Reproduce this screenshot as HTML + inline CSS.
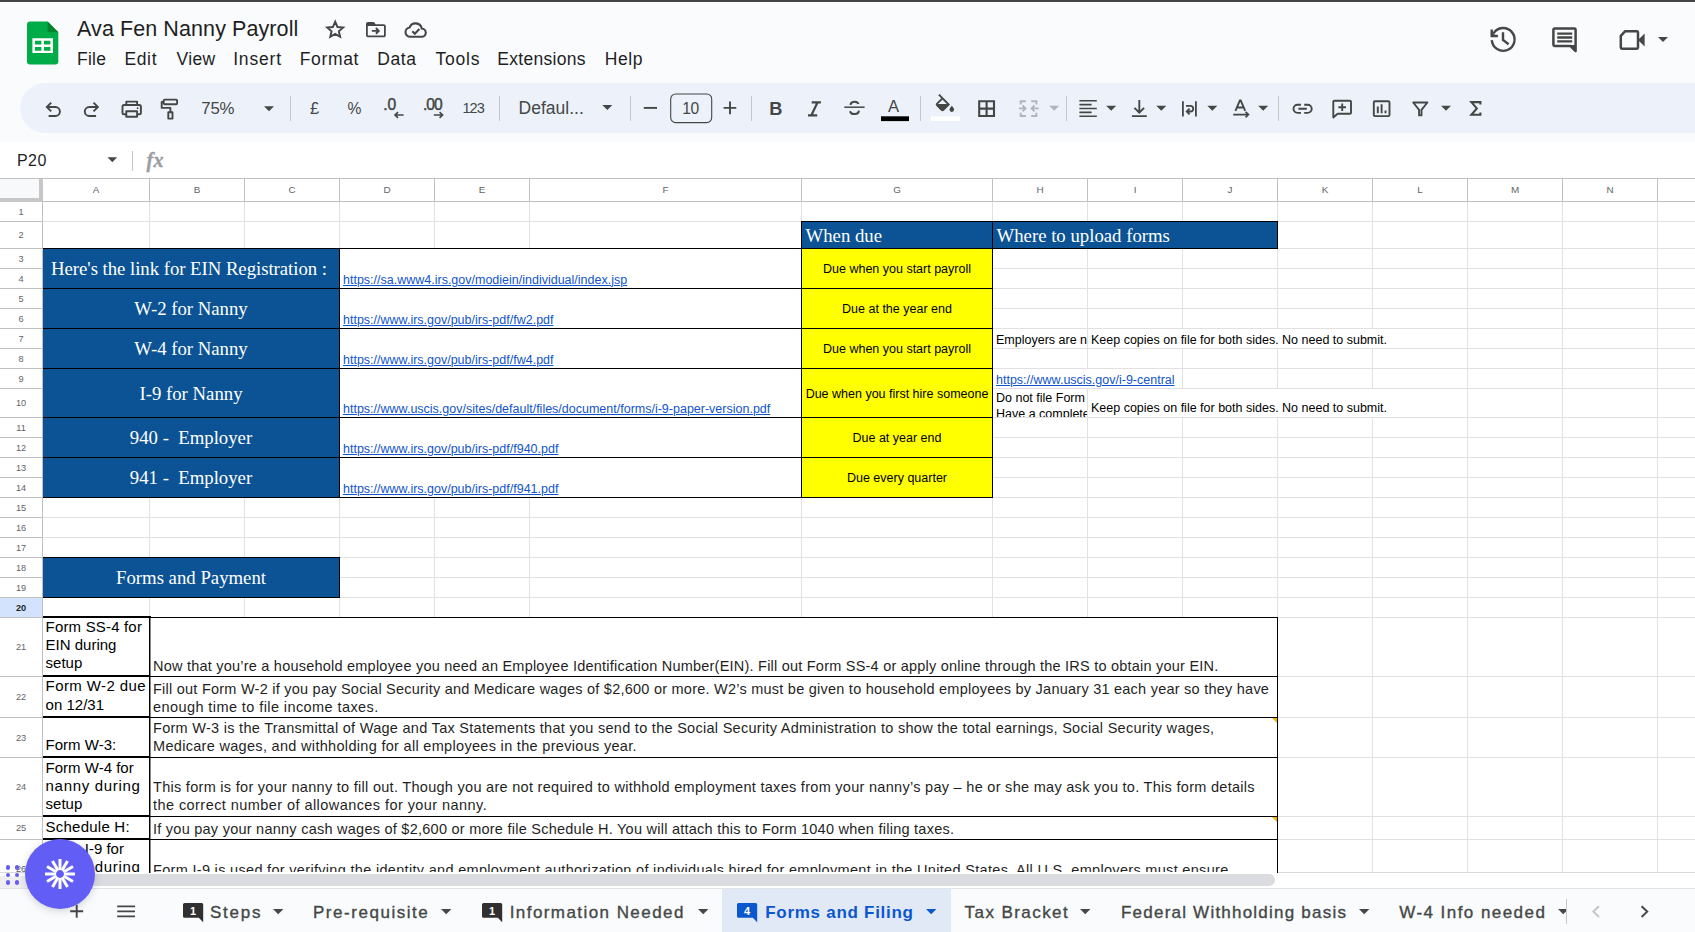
<!DOCTYPE html>
<html lang="en"><head><meta charset="utf-8"><title>Ava Fen Nanny Payroll - Google Sheets</title>
<style>
html,body{margin:0;padding:0}
body{width:1695px;height:932px;overflow:hidden;background:#f9fbfd;position:relative;font-family:"Liberation Sans",sans-serif;color:#444746}
div,span,a,svg{position:absolute;box-sizing:border-box}
.t{white-space:pre;line-height:1}
.menu{font-size:17.5px;color:#1f1f1f;top:50px;line-height:20px;white-space:pre}
.ch{font-size:9.9px;color:#5f6368;top:184px;height:11px;line-height:11px;text-align:center;white-space:pre}
.rh{font-size:9.2px;color:#5f6368;left:0;width:42px;line-height:10px;height:10px;text-align:center;white-space:pre}
.vl{width:1px;background:#e1e1e1}
.hl{height:1px;background:#e1e1e1}
.blue{background:#0b5394;border:1px solid #000;color:#fff;font-family:"Liberation Serif",serif;font-weight:400;font-size:18.75px;white-space:pre;display:flex;align-items:center;justify-content:center}
.yel{background:#ffff00;border:1px solid #000;color:#000;font-size:12.5px;white-space:pre;display:flex;align-items:center;justify-content:center}
.lnk{background:#fff;border:1px solid #000;font-size:12.5px;white-space:pre}
.lnk a, a.u{color:#1155cc;text-decoration:underline;text-decoration-thickness:1px;text-underline-offset:1px;white-space:pre}
.ar{font-size:12.5px;color:#000;white-space:pre;line-height:15px}
.ca{font-size:15px;color:#000;line-height:18px;white-space:pre}
.tab{font-size:17px;font-weight:400;color:#444746;top:903px;line-height:20px;white-space:pre;-webkit-text-stroke:0.35px #444746}
.tri{width:0;height:0;border-left:5px solid transparent;border-right:5px solid transparent;border-top:5px solid #444746}
.sep{width:1px;background:#c7c7c7;top:96px;height:25px}
.ic{overflow:visible}
</style></head><body>

<div style="left:0px;top:0px;width:1695px;height:2px;background:#444444"></div>
<div style="left:0px;top:2px;width:1695px;height:1px;background:#ffffff"></div>
<svg style="left:27px;top:21px" width="32" height="44" viewBox="0 0 32 44">
<path d="M3 0.5 H20.6 L31.3 11.2 V40.5 a3 3 0 0 1 -3 3 H3 a3 3 0 0 1 -3 -3 V3.5 a3 3 0 0 1 3 -3 z" fill="#00ac47"/>
<path d="M20.6 0.5 L31.3 11.2 H20.6 z" fill="#00832d"/>
<path d="M5.4 17.2 h20.6 v14.9 h-20.6 z M8 19.7 v3.9 h6.4 v-3.9 z M16.9 19.7 v3.9 h6.5 v-3.9 z M8 26 v3.7 h6.4 v-3.7 z M16.9 26 v3.7 h6.5 v-3.7 z" fill="#fff" fill-rule="evenodd"/>
</svg>
<div class="t" style="left:77px;top:17px;font-size:21.5px;line-height:24px;color:#1f1f1f;letter-spacing:.09px">Ava Fen Nanny Payroll</div>
<svg class="ic" style="left:325.4px;top:18.6px" width="20.4" height="20.4" viewBox="0 0 24 24"><path d="M12 3.2 l2.65 6.2 6.75 .58 -5.12 4.43 1.54 6.59 L12 17.5 6.18 21 l1.54 -6.59 L2.6 9.98 l6.75 -.58 z" fill="none" stroke="#444746" stroke-width="2.25" stroke-linejoin="miter"/></svg>
<svg class="ic" style="left:365.8px;top:22px" width="19.8" height="15.3" viewBox="0 0 22 17"><path d="M2.2 1 h6 l2 2.4 h9.6 a1.2 1.2 0 0 1 1.2 1.2 v10.2 a1.2 1.2 0 0 1 -1.2 1.2 H2.2 a1.2 1.2 0 0 1 -1.2 -1.2 V2.2 a1.2 1.2 0 0 1 1.2 -1.2 z" fill="none" stroke="#444746" stroke-width="2" stroke-linejoin="round"/><path d="M1 1 h7.6 l2.3 3.5 H1 z" fill="#444746"/><path d="M6.5 9.9 h7.2 M11 6.7 l3.2 3.2 -3.2 3.2" fill="none" stroke="#444746" stroke-width="2.1"/></svg>
<svg class="ic" style="left:404px;top:22px" width="24" height="16" viewBox="0 0 24 16"><path d="M6.2 14.8 a4.7 4.7 0 0 1 -.6 -9.36 a6.3 6.3 0 0 1 12.1 1.1 a4.15 4.15 0 0 1 .5 8.26 z" fill="none" stroke="#444746" stroke-width="2.1" stroke-linejoin="round"/><path d="M8.3 9.3 l2.5 2.5 4.6 -4.7" fill="none" stroke="#444746" stroke-width="2.1"/></svg>
<div class="menu" style="left:77px;top:49px;line-height:20px;letter-spacing:0.232px">File</div>
<div class="menu" style="left:124.4px;top:49px;line-height:20px;letter-spacing:0.648px">Edit</div>
<div class="menu" style="left:176.6px;top:49px;line-height:20px;letter-spacing:0.292px">View</div>
<div class="menu" style="left:233.2px;top:49px;line-height:20px;letter-spacing:0.824px">Insert</div>
<div class="menu" style="left:299.8px;top:49px;line-height:20px;letter-spacing:0.633px">Format</div>
<div class="menu" style="left:377.2px;top:49px;line-height:20px;letter-spacing:0.61px">Data</div>
<div class="menu" style="left:435.6px;top:49px;line-height:20px;letter-spacing:0.76px">Tools</div>
<div class="menu" style="left:497.2px;top:49px;line-height:20px;letter-spacing:0.31px">Extensions</div>
<div class="menu" style="left:604.7px;top:49px;line-height:20px;letter-spacing:0.633px">Help</div>
<svg class="ic" style="left:1486px;top:22px" width="34" height="34" viewBox="1486 22 34 34"><path d="M1493.5 33.4 A11.4 11.4 0 1 1 1491.8 40.2" fill="none" stroke="#444746" stroke-width="2.4"/><path d="M1491.7 29.6 V36 H1497.9" fill="none" stroke="#444746" stroke-width="2.4"/><path d="M1491.7 31.5 L1496 36 H1491.7 z" fill="#444746"/><path d="M1503 32.2 V40 L1508.6 44.2" fill="none" stroke="#444746" stroke-width="2.4"/></svg>
<svg class="ic" style="left:1551px;top:26px" width="28" height="28" viewBox="0 0 28 28"><path d="M3.6 2.6 h19.8 a1.2 1.2 0 0 1 1.2 1.2 v21.2 l-5 -5 H3.6 a1.2 1.2 0 0 1 -1.2 -1.2 V3.8 a1.2 1.2 0 0 1 1.2 -1.2 z" fill="none" stroke="#444746" stroke-width="2.5" stroke-linejoin="round"/><path d="M24.6 25 v-6 h-6 z" fill="#444746"/><path d="M6.2 7.6 h15 M6.2 11.5 h15 M6.2 15.4 h15" stroke="#444746" stroke-width="2.3"/></svg>
<svg class="ic" style="left:1618px;top:29px" width="28" height="22" viewBox="0 0 28 22"><path d="M7.2 2.2 h11.6 a1.2 1.2 0 0 1 1.2 1.2 v15.2 a1.2 1.2 0 0 1 -1.2 1.2 H4 a1.2 1.2 0 0 1 -1.2 -1.2 V6.8 z" fill="none" stroke="#444746" stroke-width="2.5" stroke-linejoin="round"/><path d="M20 11 l6.6 -6.4 v12.8 z" fill="#444746"/></svg>
<div class="tri" style="left:1658px;top:37px"></div>
<div style="left:20px;top:83px;width:1700px;height:50px;background:#edf2fa;border-radius:25px"></div>
<svg style="left:0;top:78px" width="1695" height="60" viewBox="0 78 1695 60"><path d="M48.6 116 H55.4 a4.5 4.5 0 0 0 0 -9 H47.4 M51.2 102.6 L46.8 107 L51.2 111.4" fill="none" stroke="#444746" stroke-width="1.9"/>
<path d="M96.1 116 H89.3 a4.5 4.5 0 0 1 0 -9 H97.3 M93.5 102.6 L97.9 107 L93.5 111.4" fill="none" stroke="#444746" stroke-width="1.9"/>
<path d="M126.3 105 V101.6 H137.1 V105 M126.3 114.2 H123.8 a1.3 1.3 0 0 1 -1.3 -1.3 V106.6 a1.6 1.6 0 0 1 1.6 -1.6 H139.3 a1.6 1.6 0 0 1 1.6 1.6 V112.9 a1.3 1.3 0 0 1 -1.3 1.3 H137.1 M126.3 111.3 H137.1 V116.8 H126.3 z" fill="none" stroke="#444746" stroke-width="1.9" stroke-linejoin="round"/>
<circle cx="137.6" cy="108.2" r="0.9" fill="#444746"/>
<path d="M164.6 99.6 H176.2 a.9 .9 0 0 1 .9 .9 V103.3 a.9 .9 0 0 1 -.9 .9 H164.6 a.9 .9 0 0 1 -.9 -.9 V100.5 a.9 .9 0 0 1 .9 -.9 z M163.7 101.9 H161.7 V107.9 H170.4 V112.3 M168.3 112.3 H172.5 V118.6 H168.3 z" fill="none" stroke="#444746" stroke-width="1.9" stroke-linejoin="round"/>
<path d="M403.6 115 H395 M398 112.1 L395 115 L398 117.9" fill="none" stroke="#444746" stroke-width="1.6"/>
<path d="M433.8 115 H442.6 M439.6 112.1 L442.6 115 L439.6 117.9" fill="none" stroke="#444746" stroke-width="1.6"/>
<path d="M643.8 107.9 H657" stroke="#444746" stroke-width="1.9"/>
<path d="M723.6 107.9 H736.3 M730 101.6 V114.2" stroke="#444746" stroke-width="1.9"/>
<rect x="670.7" y="94" width="41" height="28.6" rx="5" fill="none" stroke="#444746" stroke-width="1.1"/>
<path d="M811.7 102.3 H820.9 M808 115.3 H817.2 M817.6 102.3 L811.4 115.3" fill="none" stroke="#444746" stroke-width="2.2"/>
<path d="M844.3 107.2 H864.6" stroke="#444746" stroke-width="1.5"/>
<path d="M850.5 104.9 a4.1 3.3 0 0 1 8 -.9 M850 111.2 a4.5 3.6 0 0 0 8.9 -.6" fill="none" stroke="#444746" stroke-width="2"/>
<rect x="881" y="116.3" width="28" height="4.8" fill="#000"/>
<rect x="931" y="116.3" width="29" height="4.8" fill="#fff"/>
<path d="M938.9 94.7 L948.7 104.5 L943.4 109.8 a1.3 1.3 0 0 1 -1.8 0 L937.1 105.4 a1.3 1.3 0 0 1 0 -1.8 L942.4 98.3" fill="none" stroke="#444746" stroke-width="1.9"/>
<path d="M936.7 104.1 H948.9 L943.3 109.9 a1.2 1.2 0 0 1 -1.7 0 z" fill="#444746"/>
<path d="M951.8 105.7 c0 0 2.3 2.4 2.3 3.9 a2.3 2.3 0 0 1 -4.6 0 c0 -1.5 2.3 -3.9 2.3 -3.9 z" fill="#444746"/>
<path d="M979.2 101.2 H994 V116 H979.2 z M986.6 101.2 V116 M979.2 108.6 H994" fill="none" stroke="#444746" stroke-width="2.1"/>
<path d="M1020.7 104.4 V101.2 H1025.9 M1031.2 101.2 H1036.4 V104.4 M1020.7 112.8 V116 H1025.9 M1031.2 116 H1036.4 V112.8 M1018.9 108.4 H1025.2 M1022.6 105.5 L1025.5 108.4 L1022.6 111.3 M1038.6 108.4 H1031.9 M1034.5 105.5 L1031.6 108.4 L1034.5 111.3" fill="none" stroke="#b1b5ba" stroke-width="1.9"/>
<path d="M1049.2 105.8 h10 l-5 5 z" fill="#b1b5ba"/>
<path d="M1079.4 100.7 H1096.8 M1079.4 104.6 H1091.6 M1079.4 108.5 H1096.8 M1079.4 112.4 H1091.6 M1079.4 116.3 H1096.8" stroke="#444746" stroke-width="1.6"/>
<path d="M1139.3 100 V112 M1134.5 107.8 L1139.3 112.6 L1144.1 107.8 M1131.9 116.1 H1146.8" fill="none" stroke="#444746" stroke-width="1.9"/>
<path d="M1182.9 101.3 V116.5 M1195.9 101.3 V116.5" fill="none" stroke="#444746" stroke-width="1.8"/>
<path d="M1186 105.9 H1190.4 a2.8 2.8 0 0 1 0 5.6 H1187 M1189.6 108.6 L1186.7 111.5 L1189.6 114.4" fill="none" stroke="#444746" stroke-width="1.8"/>
<path d="M1235.4 110.9 L1239.9 100.4 H1240.7 L1245.2 110.9 M1236.9 107.5 H1243.7" fill="none" stroke="#444746" stroke-width="1.9"/>
<path d="M1233.2 114.6 H1248 M1245.6 111.9 L1248.4 114.6 L1245.6 117.3" fill="none" stroke="#444746" stroke-width="1.7"/>
<path d="M1301 112.9 H1297.6 a4.1 4.1 0 0 1 0 -8.2 H1301 M1304.2 104.7 H1307.6 a4.1 4.1 0 0 1 0 8.2 H1304.2 M1298.4 108.8 H1306.8" fill="none" stroke="#444746" stroke-width="1.9"/>
<path d="M1334.4 100.7 H1349.9 a1.1 1.1 0 0 1 1.1 1.1 V112.7 a1.1 1.1 0 0 1 -1.1 1.1 H1337.6 L1333.3 117.4 V101.8 a1.1 1.1 0 0 1 1.1 -1.1 z M1342.2 103.4 V111 M1338.4 107.2 H1346" fill="none" stroke="#444746" stroke-width="1.9" stroke-linejoin="round"/>
<path d="M1374.9 101.3 H1388.4 a1.1 1.1 0 0 1 1.1 1.1 V115 a1.1 1.1 0 0 1 -1.1 1.1 H1374.9 a1.1 1.1 0 0 1 -1.1 -1.1 V102.4 a1.1 1.1 0 0 1 1.1 -1.1 z" fill="none" stroke="#444746" stroke-width="1.9"/>
<path d="M1377.8 106.6 V113.2 M1381.6 104.2 V113.2 M1385.5 110.4 V113.2" stroke="#444746" stroke-width="1.9"/>
<path d="M1413.2 102.5 H1427.4 L1421.5 109.8 V115.4 H1419.1 V109.8 z" fill="none" stroke="#444746" stroke-width="1.9" stroke-linejoin="round"/>
<path d="M1480.4 104.4 V102.1 H1471.4 L1476.8 108.4 L1471.4 114.7 H1480.4 V112.4" fill="none" stroke="#444746" stroke-width="2.1"/>
<path d="M264 106.2 h10 l-5 5 z" fill="#444746"/>
<path d="M602.3 104.9 h10 l-5 5 z" fill="#444746"/>
<path d="M1106.2 105.8 h10 l-5 5 z" fill="#444746"/>
<path d="M1156.3 105.8 h10 l-5 5 z" fill="#444746"/>
<path d="M1207.3 105.8 h10 l-5 5 z" fill="#444746"/>
<path d="M1258.2 105.8 h10 l-5 5 z" fill="#444746"/>
<path d="M1441 105.8 h10 l-5 5 z" fill="#444746"/></svg>
<div class="sep" style="left:290px"></div>
<div class="sep" style="left:499px"></div>
<div class="sep" style="left:630px"></div>
<div class="sep" style="left:751px"></div>
<div class="sep" style="left:920px"></div>
<div class="sep" style="left:1066px"></div>
<div class="sep" style="left:1278px"></div>
<div class="t" style="left:201.3px;top:99px;font-size:16.8px;line-height:19px;letter-spacing:-.2px">75%</div>
<div class="t" style="left:310px;top:99px;font-size:16.5px;line-height:18px;">£</div>
<div class="t" style="left:347.4px;top:100px;font-size:15.6px;line-height:17px;">%</div>
<div class="t" style="left:383.3px;top:96px;font-size:15.6px;line-height:17px;-webkit-text-stroke:.45px #444746;letter-spacing:-.2px">.0</div>
<div class="t" style="left:422.9px;top:96px;font-size:15.6px;line-height:17px;-webkit-text-stroke:.45px #444746;letter-spacing:-.9px">.00</div>
<div class="t" style="left:462.4px;top:100px;font-size:14.6px;line-height:16px;letter-spacing:-.9px">123</div>
<div class="t" style="left:518.6px;top:98px;font-size:17.5px;line-height:20px;">Defaul...</div>
<div class="t" style="left:682.2px;top:100px;font-size:15.6px;line-height:17px;letter-spacing:-.3px">10</div>
<div class="t" style="left:769.2px;top:99px;font-size:18.2px;line-height:20px;font-weight:700">B</div>
<div class="t" style="left:888px;top:97px;font-size:16.6px;line-height:19px;">A</div>
<div style="left:0px;top:142px;width:1695px;height:36px;background:#fff"></div>
<div class="t" style="left:17px;top:152px;font-size:16px;line-height:17px;color:#1f1f1f;letter-spacing:.45px">P20</div>
<svg style="left:107px;top:157px" width="11" height="6" viewBox="0 0 11 6"><path d="M0.5 0.3 h9.6 l-4.8 4.9 z" fill="#444746"/></svg>
<div style="left:132px;top:151px;width:1px;height:20px;background:#c7c7c7"></div>
<div class="t" style="left:146.5px;top:148px;font-family:'Liberation Serif',serif;font-style:italic;font-weight:700;font-size:20px;color:#9b9ea2;-webkit-text-stroke:.35px #9b9ea2;letter-spacing:.3px;line-height:24px">fx</div>
<div style="left:0px;top:178px;width:1695px;height:694px;background:#fff"></div>
<div style="left:0px;top:178px;width:1695px;height:1px;background:#c0c0c0"></div>
<div style="left:0px;top:201px;width:1695px;height:1px;background:#c0c0c0"></div>
<div style="left:0px;top:179px;width:39px;height:19px;background:#f8f9fa"></div>
<div style="left:39px;top:179px;width:4px;height:23px;background:#c7c7c7"></div>
<div style="left:0px;top:198px;width:43px;height:4px;background:#c7c7c7"></div>
<div style="left:42px;top:202px;width:1px;height:670px;background:#c0c0c0"></div>
<div style="left:149px;top:179px;width:1px;height:22px;background:#c0c0c0"></div>
<div class="vl" style="left:149px;top:202px;width:1px;height:670px;"></div>
<div style="left:244px;top:179px;width:1px;height:22px;background:#c0c0c0"></div>
<div class="vl" style="left:244px;top:202px;width:1px;height:670px;"></div>
<div style="left:339px;top:179px;width:1px;height:22px;background:#c0c0c0"></div>
<div class="vl" style="left:339px;top:202px;width:1px;height:670px;"></div>
<div style="left:434px;top:179px;width:1px;height:22px;background:#c0c0c0"></div>
<div class="vl" style="left:434px;top:202px;width:1px;height:670px;"></div>
<div style="left:529px;top:179px;width:1px;height:22px;background:#c0c0c0"></div>
<div class="vl" style="left:529px;top:202px;width:1px;height:670px;"></div>
<div style="left:801px;top:179px;width:1px;height:22px;background:#c0c0c0"></div>
<div class="vl" style="left:801px;top:202px;width:1px;height:670px;"></div>
<div style="left:992px;top:179px;width:1px;height:22px;background:#c0c0c0"></div>
<div class="vl" style="left:992px;top:202px;width:1px;height:670px;"></div>
<div style="left:1087px;top:179px;width:1px;height:22px;background:#c0c0c0"></div>
<div class="vl" style="left:1087px;top:202px;width:1px;height:670px;"></div>
<div style="left:1182px;top:179px;width:1px;height:22px;background:#c0c0c0"></div>
<div class="vl" style="left:1182px;top:202px;width:1px;height:670px;"></div>
<div style="left:1277px;top:179px;width:1px;height:22px;background:#c0c0c0"></div>
<div class="vl" style="left:1277px;top:202px;width:1px;height:670px;"></div>
<div style="left:1372px;top:179px;width:1px;height:22px;background:#c0c0c0"></div>
<div class="vl" style="left:1372px;top:202px;width:1px;height:670px;"></div>
<div style="left:1467px;top:179px;width:1px;height:22px;background:#c0c0c0"></div>
<div class="vl" style="left:1467px;top:202px;width:1px;height:670px;"></div>
<div style="left:1562px;top:179px;width:1px;height:22px;background:#c0c0c0"></div>
<div class="vl" style="left:1562px;top:202px;width:1px;height:670px;"></div>
<div style="left:1657px;top:179px;width:1px;height:22px;background:#c0c0c0"></div>
<div class="vl" style="left:1657px;top:202px;width:1px;height:670px;"></div>
<div style="left:0px;top:221px;width:42px;height:1px;background:#c0c0c0"></div>
<div class="hl" style="left:43px;top:221px;width:1652px;height:1px;"></div>
<div style="left:0px;top:248px;width:42px;height:1px;background:#c0c0c0"></div>
<div class="hl" style="left:43px;top:248px;width:1652px;height:1px;"></div>
<div style="left:0px;top:268px;width:42px;height:1px;background:#c0c0c0"></div>
<div class="hl" style="left:43px;top:268px;width:1652px;height:1px;"></div>
<div style="left:0px;top:288px;width:42px;height:1px;background:#c0c0c0"></div>
<div class="hl" style="left:43px;top:288px;width:1652px;height:1px;"></div>
<div style="left:0px;top:308px;width:42px;height:1px;background:#c0c0c0"></div>
<div class="hl" style="left:43px;top:308px;width:1652px;height:1px;"></div>
<div style="left:0px;top:328px;width:42px;height:1px;background:#c0c0c0"></div>
<div class="hl" style="left:43px;top:328px;width:1652px;height:1px;"></div>
<div style="left:0px;top:348px;width:42px;height:1px;background:#c0c0c0"></div>
<div class="hl" style="left:43px;top:348px;width:1652px;height:1px;"></div>
<div style="left:0px;top:368px;width:42px;height:1px;background:#c0c0c0"></div>
<div class="hl" style="left:43px;top:368px;width:1652px;height:1px;"></div>
<div style="left:0px;top:388px;width:42px;height:1px;background:#c0c0c0"></div>
<div class="hl" style="left:43px;top:388px;width:1652px;height:1px;"></div>
<div style="left:0px;top:417px;width:42px;height:1px;background:#c0c0c0"></div>
<div class="hl" style="left:43px;top:417px;width:1652px;height:1px;"></div>
<div style="left:0px;top:437px;width:42px;height:1px;background:#c0c0c0"></div>
<div class="hl" style="left:43px;top:437px;width:1652px;height:1px;"></div>
<div style="left:0px;top:457px;width:42px;height:1px;background:#c0c0c0"></div>
<div class="hl" style="left:43px;top:457px;width:1652px;height:1px;"></div>
<div style="left:0px;top:477px;width:42px;height:1px;background:#c0c0c0"></div>
<div class="hl" style="left:43px;top:477px;width:1652px;height:1px;"></div>
<div style="left:0px;top:497px;width:42px;height:1px;background:#c0c0c0"></div>
<div class="hl" style="left:43px;top:497px;width:1652px;height:1px;"></div>
<div style="left:0px;top:517px;width:42px;height:1px;background:#c0c0c0"></div>
<div class="hl" style="left:43px;top:517px;width:1652px;height:1px;"></div>
<div style="left:0px;top:537px;width:42px;height:1px;background:#c0c0c0"></div>
<div class="hl" style="left:43px;top:537px;width:1652px;height:1px;"></div>
<div style="left:0px;top:557px;width:42px;height:1px;background:#c0c0c0"></div>
<div class="hl" style="left:43px;top:557px;width:1652px;height:1px;"></div>
<div style="left:0px;top:577px;width:42px;height:1px;background:#c0c0c0"></div>
<div class="hl" style="left:43px;top:577px;width:1652px;height:1px;"></div>
<div style="left:0px;top:597px;width:42px;height:1px;background:#c0c0c0"></div>
<div class="hl" style="left:43px;top:597px;width:1652px;height:1px;"></div>
<div style="left:0px;top:617px;width:42px;height:1px;background:#c0c0c0"></div>
<div class="hl" style="left:43px;top:617px;width:1652px;height:1px;"></div>
<div style="left:0px;top:676px;width:42px;height:1px;background:#c0c0c0"></div>
<div class="hl" style="left:43px;top:676px;width:1652px;height:1px;"></div>
<div style="left:0px;top:717px;width:42px;height:1px;background:#c0c0c0"></div>
<div class="hl" style="left:43px;top:717px;width:1652px;height:1px;"></div>
<div style="left:0px;top:757px;width:42px;height:1px;background:#c0c0c0"></div>
<div class="hl" style="left:43px;top:757px;width:1652px;height:1px;"></div>
<div style="left:0px;top:816px;width:42px;height:1px;background:#c0c0c0"></div>
<div class="hl" style="left:43px;top:816px;width:1652px;height:1px;"></div>
<div style="left:0px;top:839px;width:42px;height:1px;background:#c0c0c0"></div>
<div class="hl" style="left:43px;top:839px;width:1652px;height:1px;"></div>
<div style="left:0px;top:872px;width:1695px;height:1px;background:#d9d9d9"></div>
<div class="ch" style="left:43px;width:106px">A</div>
<div class="ch" style="left:150px;width:94px">B</div>
<div class="ch" style="left:245px;width:94px">C</div>
<div class="ch" style="left:340px;width:94px">D</div>
<div class="ch" style="left:435px;width:94px">E</div>
<div class="ch" style="left:530px;width:271px">F</div>
<div class="ch" style="left:802px;width:190px">G</div>
<div class="ch" style="left:993px;width:94px">H</div>
<div class="ch" style="left:1088px;width:94px">I</div>
<div class="ch" style="left:1183px;width:94px">J</div>
<div class="ch" style="left:1278px;width:94px">K</div>
<div class="ch" style="left:1373px;width:94px">L</div>
<div class="ch" style="left:1468px;width:94px">M</div>
<div class="ch" style="left:1563px;width:94px">N</div>
<div class="rh" style="top:207px">1</div>
<div class="rh" style="top:230px">2</div>
<div class="rh" style="top:254px">3</div>
<div class="rh" style="top:274px">4</div>
<div class="rh" style="top:294px">5</div>
<div class="rh" style="top:314px">6</div>
<div class="rh" style="top:334px">7</div>
<div class="rh" style="top:354px">8</div>
<div class="rh" style="top:374px">9</div>
<div class="rh" style="top:398px">10</div>
<div class="rh" style="top:423px">11</div>
<div class="rh" style="top:443px">12</div>
<div class="rh" style="top:463px">13</div>
<div class="rh" style="top:483px">14</div>
<div class="rh" style="top:503px">15</div>
<div class="rh" style="top:523px">16</div>
<div class="rh" style="top:543px">17</div>
<div class="rh" style="top:563px">18</div>
<div class="rh" style="top:583px">19</div>
<div style="left:0px;top:598px;width:42px;height:19px;background:#d3e3fd"></div>
<div class="rh" style="top:603px;font-weight:700;color:#1f1f1f">20</div>
<div class="rh" style="top:642px">21</div>
<div class="rh" style="top:692px">22</div>
<div class="rh" style="top:733px">23</div>
<div class="rh" style="top:782px">24</div>
<div class="rh" style="top:823px">25</div>
<div class="rh" style="top:864px;height:8px;overflow:hidden">26</div>
<div class="blue" style="left:801px;top:221px;width:192px;height:28px;justify-content:flex-start;padding-left:3.5px;padding-top:2px">When due</div>
<div class="blue" style="left:992px;top:221px;width:286px;height:28px;justify-content:flex-start;padding-left:3.5px;padding-top:2px">Where to upload forms</div>
<div class="blue" style="left:42px;top:248px;width:298px;height:41px;border-left:0;margin-left:1px;width:297px;letter-spacing:-.035px;padding-right:4px">Here's the link for EIN Registration :</div>
<div class="lnk" style="left:339px;top:248px;width:463px;height:41px;"><a style="left:3px;bottom:1px;line-height:14px">https://sa.www4.irs.gov/modiein/individual/index.jsp</a></div>
<div class="yel" style="left:801px;top:248px;width:192px;height:41px;">Due when you start payroll</div>
<div class="blue" style="left:42px;top:288px;width:298px;height:41px;border-left:0;margin-left:1px;width:297px">W-2 for Nanny</div>
<div class="lnk" style="left:339px;top:288px;width:463px;height:41px;"><a style="left:3px;bottom:1px;line-height:14px">https://www.irs.gov/pub/irs-pdf/fw2.pdf</a></div>
<div class="yel" style="left:801px;top:288px;width:192px;height:41px;">Due at the year end</div>
<div class="blue" style="left:42px;top:328px;width:298px;height:41px;border-left:0;margin-left:1px;width:297px">W-4 for Nanny</div>
<div class="lnk" style="left:339px;top:328px;width:463px;height:41px;"><a style="left:3px;bottom:1px;line-height:14px">https://www.irs.gov/pub/irs-pdf/fw4.pdf</a></div>
<div class="yel" style="left:801px;top:328px;width:192px;height:41px;">Due when you start payroll</div>
<div class="blue" style="left:42px;top:368px;width:298px;height:50px;border-left:0;margin-left:1px;width:297px;padding-top:2px">I-9 for Nanny</div>
<div class="lnk" style="left:339px;top:368px;width:463px;height:50px;"><a style="left:3px;bottom:1px;line-height:14px">https://www.uscis.gov/sites/default/files/document/forms/i-9-paper-version.pdf</a></div>
<div class="yel" style="left:801px;top:368px;width:192px;height:50px;padding-top:2px">Due when you first hire someone</div>
<div class="blue" style="left:42px;top:417px;width:298px;height:41px;border-left:0;margin-left:1px;width:297px">940 -  Employer</div>
<div class="lnk" style="left:339px;top:417px;width:463px;height:41px;"><a style="left:3px;bottom:1px;line-height:14px">https://www.irs.gov/pub/irs-pdf/f940.pdf</a></div>
<div class="yel" style="left:801px;top:417px;width:192px;height:41px;">Due at year end</div>
<div class="blue" style="left:42px;top:457px;width:298px;height:41px;border-left:0;margin-left:1px;width:297px">941 -  Employer</div>
<div class="lnk" style="left:339px;top:457px;width:463px;height:41px;"><a style="left:3px;bottom:1px;line-height:14px">https://www.irs.gov/pub/irs-pdf/f941.pdf</a></div>
<div class="yel" style="left:801px;top:457px;width:192px;height:41px;">Due every quarter</div>
<div class="blue" style="left:42px;top:557px;width:298px;height:41px;border-left:0;margin-left:1px;width:297px">Forms and Payment</div>
<div class="ar" style="left:993px;top:329px;width:94px;height:19px;background:#fff;overflow:hidden;"><span style="left:3px;top:4px">Employers are not required to submit</span></div>
<div class="ar" style="left:1088px;top:329px;width:379px;height:19px;background:#fff;overflow:hidden;"><span style="left:3px;top:4px">Keep copies on file for both sides. No need to submit.</span></div>
<div class="ar" style="left:993px;top:369px;width:189px;height:19px;background:#fff;overflow:hidden;"><a class="u" style="left:3px;top:4px">https://www.uscis.gov/i-9-central</a></div>
<div class="ar" style="left:993px;top:389px;width:94px;height:28px;background:#fff;overflow:hidden;"><span style="left:3px;top:2px;line-height:15.6px">Do not file Form
Have a complete</span></div>
<div class="ar" style="left:1088px;top:389px;width:379px;height:28px;background:#fff;overflow:hidden;"><span style="left:3px;bottom:1px">Keep copies on file for both sides. No need to submit.</span></div>
<div style="left:149px;top:617px;width:1129px;height:60px;background:#fff;border:1px solid #000"></div>
<div style="left:43px;top:618px;width:107px;height:59px;background:#fff;border-right:1px solid #000;border-bottom:2px solid #000"></div>
<div style="left:150px;top:618px;width:1px;height:58px;background:#8a8a8a"></div>
<div style="left:149px;top:676px;width:1129px;height:42px;background:#fff;border:1px solid #000"></div>
<div style="left:43px;top:677px;width:107px;height:41px;background:#fff;border-right:1px solid #000;border-bottom:2px solid #000"></div>
<div style="left:150px;top:677px;width:1px;height:40px;background:#8a8a8a"></div>
<div style="left:149px;top:717px;width:1129px;height:41px;background:#fff;border:1px solid #000"></div>
<div style="left:43px;top:718px;width:107px;height:40px;background:#fff;border-right:1px solid #000;border-bottom:2px solid #000"></div>
<div style="left:150px;top:718px;width:1px;height:39px;background:#8a8a8a"></div>
<div style="left:149px;top:757px;width:1129px;height:60px;background:#fff;border:1px solid #000"></div>
<div style="left:43px;top:758px;width:107px;height:59px;background:#fff;border-right:1px solid #000;border-bottom:2px solid #000"></div>
<div style="left:150px;top:758px;width:1px;height:58px;background:#8a8a8a"></div>
<div style="left:149px;top:816px;width:1129px;height:24px;background:#fff;border:1px solid #000"></div>
<div style="left:43px;top:817px;width:107px;height:23px;background:#fff;border-right:1px solid #000;border-bottom:2px solid #000"></div>
<div style="left:150px;top:817px;width:1px;height:22px;background:#8a8a8a"></div>
<div style="left:149px;top:839px;width:1129px;height:59px;background:#fff;border:1px solid #000"></div>
<div style="left:43px;top:840px;width:107px;height:58px;background:#fff;border-right:1px solid #000;border-bottom:2px solid #000"></div>
<div style="left:150px;top:840px;width:1px;height:57px;background:#8a8a8a"></div>
<div style="left:43px;top:616px;width:108px;height:2px;background:#000"></div>
<div style="left:0;top:600px;width:1695px;height:272px;overflow:hidden">
<div class="t" style="left:153px;top:58px;font-size:14.5px;line-height:16px;color:#000;letter-spacing:0.222px;color:#1f1f1f">Now that you’re a household employee you need an Employee Identification Number(EIN). Fill out Form SS-4 or apply online through the IRS to obtain your EIN.</div>
<div class="t" style="left:153px;top:81px;font-size:14.5px;line-height:16px;color:#000;letter-spacing:0.238px;color:#1f1f1f">Fill out Form W-2 if you pay Social Security and Medicare wages of $2,600 or more. W2’s must be given to household employees by January 31 each year so they have</div>
<div class="t" style="left:153px;top:99px;font-size:14.5px;line-height:16px;color:#000;letter-spacing:0.416px;color:#1f1f1f">enough time to file income taxes.</div>
<div class="t" style="left:153px;top:120px;font-size:14.5px;line-height:16px;color:#000;letter-spacing:0.283px;color:#1f1f1f">Form W-3 is the Transmittal of Wage and Tax Statements that you send to the Social Security Administration to show the total earnings, Social Security wages,</div>
<div class="t" style="left:153px;top:138px;font-size:14.5px;line-height:16px;color:#000;letter-spacing:0.311px;color:#1f1f1f">Medicare wages, and withholding for all employees in the previous year.</div>
<div class="t" style="left:153px;top:179px;font-size:14.5px;line-height:16px;color:#000;letter-spacing:0.289px;color:#1f1f1f">This form is for your nanny to fill out. Though you are not required to withhold employment taxes from your nanny’s pay – he or she may ask you to. This form details</div>
<div class="t" style="left:153px;top:197px;font-size:14.5px;line-height:16px;color:#000;letter-spacing:0.435px;color:#1f1f1f">the correct number of allowances for your nanny.</div>
<div class="t" style="left:153px;top:221px;font-size:14.5px;line-height:16px;color:#000;letter-spacing:0.249px;color:#1f1f1f">If you pay your nanny cash wages of $2,600 or more file Schedule H. You will attach this to Form 1040 when filing taxes.</div>
<div class="t" style="left:153px;top:262px;font-size:14.5px;line-height:16px;color:#000;letter-spacing:0.313px;color:#1f1f1f">Form I-9 is used for verifying the identity and employment authorization of individuals hired for employment in the United States. All U.S. employers must ensure</div>
<div class="t" style="left:45.6px;top:18px;font-size:15px;line-height:17px;color:#000;letter-spacing:0.176px;">Form SS-4 for</div>
<div class="t" style="left:45.6px;top:36px;font-size:15px;line-height:17px;color:#000;">EIN during</div>
<div class="t" style="left:45.6px;top:54px;font-size:15px;line-height:17px;color:#000;">setup</div>
<div class="t" style="left:45.6px;top:77px;font-size:15px;line-height:17px;color:#000;letter-spacing:0.401px;">Form W-2 due</div>
<div class="t" style="left:45.6px;top:96px;font-size:15px;line-height:17px;color:#000;">on 12/31</div>
<div class="t" style="left:45.6px;top:136px;font-size:15px;line-height:17px;color:#000;">Form W-3:</div>
<div class="t" style="left:45.6px;top:159px;font-size:15px;line-height:17px;color:#000;">Form W-4 for</div>
<div class="t" style="left:45.6px;top:177px;font-size:15px;line-height:17px;color:#000;letter-spacing:0.688px;">nanny during</div>
<div class="t" style="left:45.6px;top:195px;font-size:15px;line-height:17px;color:#000;">setup</div>
<div class="t" style="left:45.6px;top:218px;font-size:15px;line-height:17px;color:#000;letter-spacing:0.228px;">Schedule H:</div>
<div class="t" style="left:45.6px;top:240px;font-size:15px;line-height:17px;color:#000;">Form I-9 for</div>
<div class="t" style="left:45.6px;top:258px;font-size:15px;line-height:17px;color:#000;letter-spacing:0.688px;">nanny during</div>
<div class="t" style="left:45.6px;top:276px;font-size:15px;line-height:17px;color:#000;">setup</div>
</div>
<svg style="left:1271.5px;top:718px" width="5.5" height="5.5" viewBox="0 0 6 6"><path d="M0 0 H6 V6 z" fill="#f4b400"/></svg>
<svg style="left:1271.5px;top:817px" width="5.5" height="5.5" viewBox="0 0 6 6"><path d="M0 0 H6 V6 z" fill="#f4b400"/></svg>
<div style="left:0px;top:873px;width:1695px;height:15px;background:#fff"></div>
<div style="left:0px;top:876px;width:62px;height:12px;background:#efefef"></div>
<div style="left:60px;top:874px;width:1215px;height:12px;background:#dadce0;border-radius:6px"></div>
<div style="left:0px;top:888px;width:1695px;height:1px;background:#e1e3e6"></div>
<div style="left:0px;top:889px;width:1695px;height:43px;background:#f9fbfd"></div>
<svg style="left:66px;top:901px" width="80" height="22" viewBox="66 901 80 22"><path d="M70.2 911.3 H83.2 M76.7 904.8 V917.8" stroke="#444746" stroke-width="1.9"/><path d="M117.2 906.3 H135 M117.2 911.3 H135 M117.2 916.3 H135" stroke="#444746" stroke-width="1.8"/></svg>
<div style="left:722px;top:889px;width:228.8px;height:43px;background:#e1e9f7"></div>
<svg style="left:183px;top:903px" width="21" height="20" viewBox="0 0 21 20"><path d="M1.6 0 H18.6 a1.6 1.6 0 0 1 1.6 1.6 V19.2 L15.8 14.8 H1.6 a1.6 1.6 0 0 1 -1.6 -1.6 V1.6 a1.6 1.6 0 0 1 1.6 -1.6 z" fill="#303030"/><text x="10" y="11.6" text-anchor="middle" font-family="Liberation Sans" font-weight="700" font-size="11" fill="#fff">1</text></svg>
<div class="tab" style="left:210px;letter-spacing:1.729px">Steps</div>
<svg style="left:273.3px;top:909px" width="11" height="6" viewBox="0 0 11 6"><path d="M0 0 h10.4 l-5.2 5.2 z" fill="#444746"/></svg>
<div class="tab" style="left:313px;letter-spacing:1.535px">Pre-requisite</div>
<svg style="left:441.40000000000003px;top:909px" width="11" height="6" viewBox="0 0 11 6"><path d="M0 0 h10.4 l-5.2 5.2 z" fill="#444746"/></svg>
<svg style="left:482px;top:903px" width="21" height="20" viewBox="0 0 21 20"><path d="M1.6 0 H18.6 a1.6 1.6 0 0 1 1.6 1.6 V19.2 L15.8 14.8 H1.6 a1.6 1.6 0 0 1 -1.6 -1.6 V1.6 a1.6 1.6 0 0 1 1.6 -1.6 z" fill="#303030"/><text x="10" y="11.6" text-anchor="middle" font-family="Liberation Sans" font-weight="700" font-size="11" fill="#fff">1</text></svg>
<div class="tab" style="left:509.7px;letter-spacing:1.434px">Information Needed</div>
<svg style="left:697.5px;top:909px" width="11" height="6" viewBox="0 0 11 6"><path d="M0 0 h10.4 l-5.2 5.2 z" fill="#444746"/></svg>
<svg style="left:737px;top:903px" width="21" height="20" viewBox="0 0 21 20"><path d="M1.6 0 H18.6 a1.6 1.6 0 0 1 1.6 1.6 V19.2 L15.8 14.8 H1.6 a1.6 1.6 0 0 1 -1.6 -1.6 V1.6 a1.6 1.6 0 0 1 1.6 -1.6 z" fill="#0b57d0"/><text x="10" y="11.6" text-anchor="middle" font-family="Liberation Sans" font-weight="700" font-size="11" fill="#fff">4</text></svg>
<div class="tab" style="left:765.2px;letter-spacing:0.723px;color:#0b57d0;font-weight:700;-webkit-text-stroke:0">Forms and Filing</div>
<svg style="left:925.8px;top:909px" width="11" height="6" viewBox="0 0 11 6"><path d="M0 0 h10.4 l-5.2 5.2 z" fill="#0b57d0"/></svg>
<div class="tab" style="left:964.6px;letter-spacing:1.429px">Tax Bracket</div>
<svg style="left:1080.3px;top:909px" width="11" height="6" viewBox="0 0 11 6"><path d="M0 0 h10.4 l-5.2 5.2 z" fill="#444746"/></svg>
<div class="tab" style="left:1121px;letter-spacing:1.22px">Federal Withholding basis</div>
<svg style="left:1358.8px;top:909px" width="11" height="6" viewBox="0 0 11 6"><path d="M0 0 h10.4 l-5.2 5.2 z" fill="#444746"/></svg>
<div style="left:1390px;top:889px;width:175.5px;height:43px;overflow:hidden">
<div class="tab" style="left:9.2px;top:14px;letter-spacing:1.451px">W-4 Info needed</div>
<svg style="left:168px;top:20px" width="11" height="6" viewBox="0 0 11 6"><path d="M0 0 h10.4 l-5.2 5.2 z" fill="#444746"/></svg>
</div>
<div style="left:1566px;top:899px;width:1px;height:25px;background:#c7c7c7"></div>
<svg style="left:1588px;top:903px" width="64" height="18" viewBox="1588 903 64 18"><path d="M1599 906.2 L1593.4 911.6 L1599 917" fill="none" stroke="#c4c7c5" stroke-width="2"/><path d="M1641.6 906.2 L1647.2 911.6 L1641.6 917" fill="none" stroke="#444746" stroke-width="2"/></svg>
<div style="left:5.8999999999999995px;top:865.1px;width:4.6px;height:4.6px;background:#625df5;border-radius:50%"></div>
<div style="left:5.8999999999999995px;top:872.6px;width:4.6px;height:4.6px;background:#625df5;border-radius:50%"></div>
<div style="left:5.8999999999999995px;top:880.2px;width:4.6px;height:4.6px;background:#625df5;border-radius:50%"></div>
<div style="left:14.899999999999999px;top:865.1px;width:4.6px;height:4.6px;background:#625df5;border-radius:50%"></div>
<div style="left:14.899999999999999px;top:872.6px;width:4.6px;height:4.6px;background:#625df5;border-radius:50%"></div>
<div style="left:14.899999999999999px;top:880.2px;width:4.6px;height:4.6px;background:#625df5;border-radius:50%"></div>
<div style="left:24.9px;top:838.8px;width:70px;height:70px;background:#625df5;border-radius:50%;box-shadow:0 2px 9px rgba(0,0,0,.16)"></div>
<svg style="left:39.8px;top:854px" width="40" height="40" viewBox="-20 -20 40 40"><g stroke="#fff" stroke-width="3" fill="none"><path d="M0 -4.6 V-15" transform="rotate(0)" /><path d="M0 -4.6 V-15" transform="rotate(30)" /><path d="M0 -4.6 V-15" transform="rotate(60)" /><path d="M0 -4.6 V-15" transform="rotate(90)" /><path d="M0 -4.6 V-15" transform="rotate(120)" /><path d="M0 -4.6 V-15" transform="rotate(150)" /><path d="M0 -4.6 V-15" transform="rotate(180)" /><path d="M0 -4.6 V-15" transform="rotate(210)" /><path d="M0 -4.6 V-15" transform="rotate(240)" /><path d="M0 -4.6 V-15" transform="rotate(270)" /><path d="M0 -4.6 V-15" transform="rotate(300)" /><path d="M0 -4.6 V-15" transform="rotate(330)" /></g><circle r="4.6" fill="#625df5" stroke="#fff" stroke-width="1.3"/></svg>
</body></html>
